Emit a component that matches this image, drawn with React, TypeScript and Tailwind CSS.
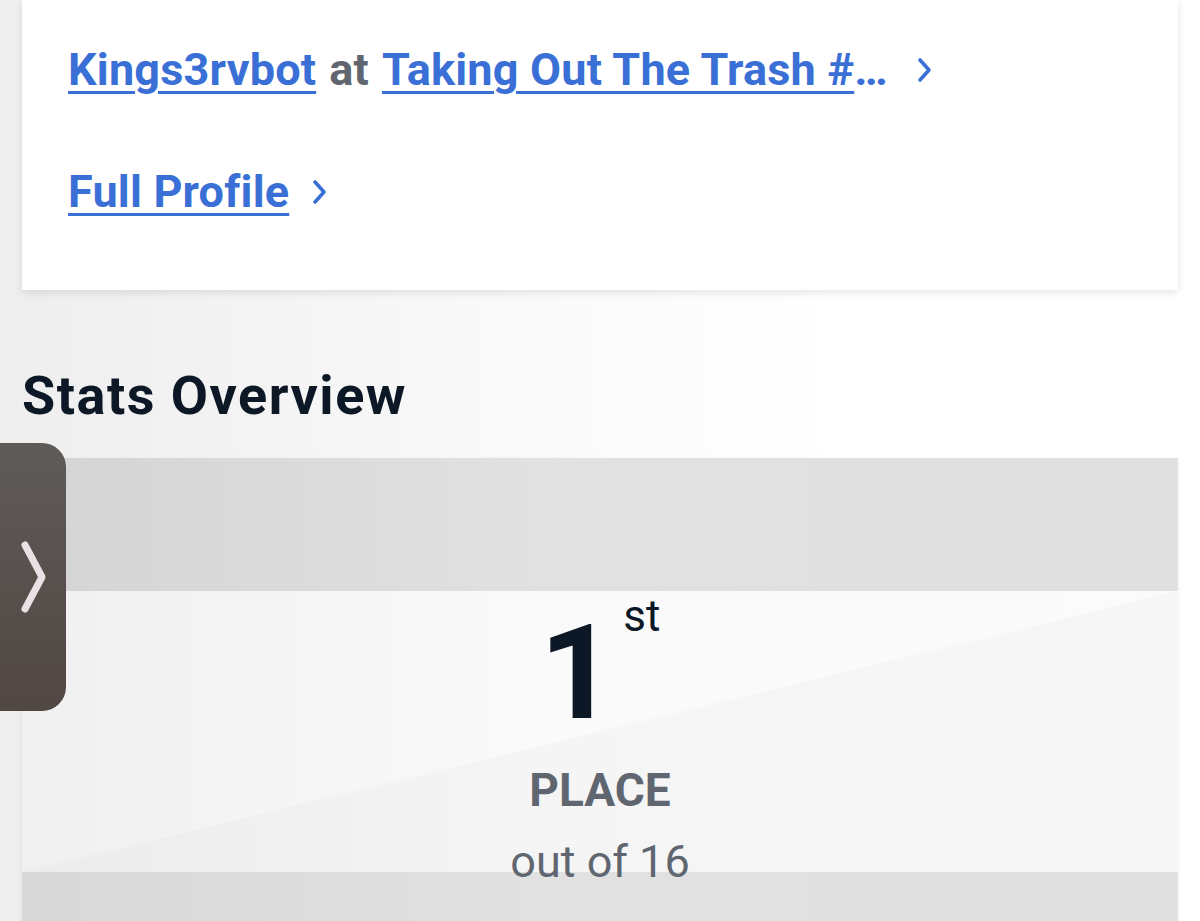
function LinkChevron({ gap }: { gap: string }) {
  return (
    <svg width="18" height="26" viewBox="0 0 18 26" className={`${gap} shrink-0`}>
      <polyline
        points="4,3 13,13 4,23"
        fill="none"
        stroke="#3a70d6"
        strokeWidth="3.6"
        strokeLinecap="round"
        strokeLinejoin="round"
      />
    </svg>
  )
}

export default function App() {
  return (
    <div className="relative min-h-screen overflow-hidden bg-[linear-gradient(to_right,#eeeeee,#f9f9f9_40%,#ffffff_70%)] px-[22px] font-['Roboto',sans-serif]">
      {/* Match card */}
      <div className="flex h-[290px] flex-col bg-white pl-[46px] shadow-[0_3px_8px_rgba(0,0,0,0.10)]">
        <div className="mt-[44px] flex items-center whitespace-nowrap text-[45px] font-bold leading-[52px] tracking-[0.2px]">
          <span className="text-[#3a70d6] underline decoration-[3px] underline-offset-[6px]">Kings3rvbot</span>
          <span className="mx-[13px] text-[#5f6670]">at</span>
          <span className="text-[#3a70d6] underline decoration-[3px] underline-offset-[6px]">Taking Out The Trash #</span>
          <span className="text-[#3a70d6]">…</span>
          <LinkChevron gap="ml-[28px]" />
        </div>
        <div className="mt-[70px] flex items-center text-[45px] font-bold leading-[52px] tracking-[0.2px]">
          <span className="text-[#3a70d6] underline decoration-[3px] underline-offset-[6px]">Full Profile</span>
          <LinkChevron gap="ml-[22px]" />
        </div>
      </div>

      {/* Stats */}
      <h2 className="mt-[76px] text-[54px] font-bold leading-[60px] tracking-[1.5px] text-[#0d1826]">Stats Overview</h2>

      <div className="mt-[32px] shadow-[0_2px_6px_rgba(0,0,0,0.06)]">
        <div className="h-[133px] bg-[linear-gradient(to_right,#d4d4d4,#e1e1e1_45%,#e0e0e0)]" />
        <div className="relative flex h-[281px] flex-col items-center bg-[linear-gradient(to_bottom_right,rgba(0,0,0,0)_49.8%,rgba(0,0,0,0.018)_50.2%),linear-gradient(to_right,#f0f0f0,#fafafa_45%,#fbfbfb)]">
          <div className="flex items-start">
            <span className="mt-[16px] text-[132px] font-bold leading-[132px] text-[#0d1826]">1</span>
            <span className="ml-[8px] text-[44px] leading-[50px] text-[#0d1826]">st</span>
          </div>
          <div className="mt-[25px] text-[46px] font-bold leading-[52px] text-[#5f6670]">PLACE</div>
          <div className="relative z-10 mt-[20px] text-[45px] leading-[52px] text-[#5f6670]">out of 16</div>
        </div>
        <div className="-mt-[1px] h-[60px] bg-[linear-gradient(to_right,#d8d8d8,#e1e1e1_45%,#e0e0e0)]" />
      </div>

      {/* Side drawer tab */}
      <div className="absolute left-0 top-[443px] flex h-[268px] w-[66px] items-center rounded-r-[24px] bg-[linear-gradient(to_bottom,#5f5b59,#514743)] pl-[18px]">
        <svg width="30" height="76" viewBox="0 0 30 76">
          <polyline
            points="7,6 24,38 7,70"
            fill="none"
            stroke="#e9e1e3"
            strokeWidth="7"
            strokeLinecap="round"
            strokeLinejoin="round"
          />
        </svg>
      </div>
    </div>
  )
}
